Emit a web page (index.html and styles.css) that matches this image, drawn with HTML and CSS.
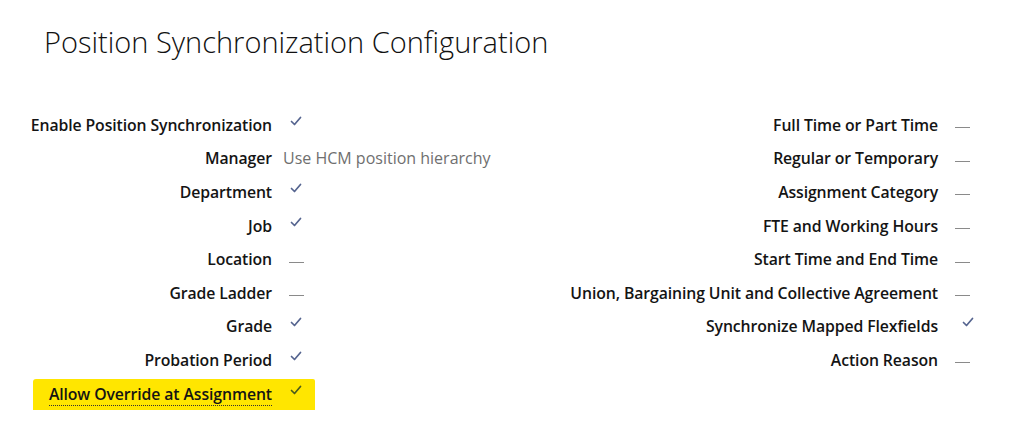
FILE: index.html
```html
<!DOCTYPE html>
<html lang="en">
<head>
    <meta charset="UTF-8">
    <meta name="viewport" content="width=device-width, initial-scale=1.0">
    <title>Position Synchronization Configuration</title>
    <link rel="stylesheet" href="styles.css">
</head>
<body>

<div class="page">
    <h1 class="title">Position Synchronization Configuration</h1>

    <div class="form">
        <div class="group left">
            <div class="row"><span class="label">Enable Position Synchronization</span><span class="value"><svg class="check" viewBox="0 0 12 10"><path d="M1.5 5.5 L4.5 8.5 L10.5 1.5"/></svg></span></div>
            <div class="row"><span class="label">Manager</span><span class="value text">Use HCM position hierarchy</span></div>
            <div class="row"><span class="label">Department</span><span class="value"><svg class="check" viewBox="0 0 12 10"><path d="M1.5 5.5 L4.5 8.5 L10.5 1.5"/></svg></span></div>
            <div class="row"><span class="label">Job</span><span class="value"><svg class="check" viewBox="0 0 12 10"><path d="M1.5 5.5 L4.5 8.5 L10.5 1.5"/></svg></span></div>
            <div class="row"><span class="label">Location</span><span class="value"><span class="dash"></span></span></div>
            <div class="row"><span class="label">Grade Ladder</span><span class="value"><span class="dash"></span></span></div>
            <div class="row"><span class="label">Grade</span><span class="value"><svg class="check" viewBox="0 0 12 10"><path d="M1.5 5.5 L4.5 8.5 L10.5 1.5"/></svg></span></div>
            <div class="row"><span class="label">Probation Period</span><span class="value"><svg class="check" viewBox="0 0 12 10"><path d="M1.5 5.5 L4.5 8.5 L10.5 1.5"/></svg></span></div>
            <div class="row marked"><span class="label"><span class="hint">Allow Override at Assignment</span></span><span class="value"><svg class="check" viewBox="0 0 12 10"><path d="M1.5 5.5 L4.5 8.5 L10.5 1.5"/></svg></span></div>
        </div>

        <div class="group right">
            <div class="row"><span class="label">Full Time or Part Time</span><span class="value"><span class="dash"></span></span></div>
            <div class="row"><span class="label">Regular or Temporary</span><span class="value"><span class="dash"></span></span></div>
            <div class="row"><span class="label">Assignment Category</span><span class="value"><span class="dash"></span></span></div>
            <div class="row"><span class="label">FTE and Working Hours</span><span class="value"><span class="dash"></span></span></div>
            <div class="row"><span class="label">Start Time and End Time</span><span class="value"><span class="dash"></span></span></div>
            <div class="row"><span class="label">Union, Bargaining Unit and Collective Agreement</span><span class="value"><span class="dash"></span></span></div>
            <div class="row"><span class="label">Synchronize Mapped Flexfields</span><span class="value"><svg class="check" viewBox="0 0 12 10"><path d="M1.5 5.5 L4.5 8.5 L10.5 1.5"/></svg></span></div>
            <div class="row"><span class="label">Action Reason</span><span class="value"><span class="dash"></span></span></div>
        </div>
    </div>
</div>

</body>
</html>
```

FILE: styles.css
```css
body {
    margin: 0;
    background: #fff;
    font-family: "Open Sans", "Noto Sans", sans-serif;
    color: #000;
}

.page {
    padding: 22px 0 0 0;
}

.title {
    margin: 0 0 0 44px;
    font-size: 29px;
    font-weight: 300;
    line-height: 40px;
    color: #111;
}

.form {
    display: grid;
    grid-template-columns: 520px 1fr;
    margin-top: 46px;
}

.row {
    display: flex;
    align-items: center;
    height: 33.6px;
    position: relative;
}

.label {
    flex: none;
    text-align: right;
    font-size: 15.8px;
    font-weight: 600;
    letter-spacing: -0.1px;
    white-space: nowrap;
    position: relative;
    color: #141414;
}

.left .label {
    width: 272px;
}

.right .label {
    width: 418px;
}

.value {
    display: flex;
    align-items: center;
    position: relative;
}

.left .value {
    margin-left: 11px;
}

.right .value {
    margin-left: 17px;
}

.value.text {
    font-size: 16px;
    color: #6f6f6f;
}

.check {
    width: 12px;
    height: 10px;
    margin: -8px 0 0 7px;
    fill: none;
    stroke: #55648f;
    stroke-width: 1.7;
    stroke-linecap: round;
    stroke-linejoin: round;
}

.dash {
    display: block;
    width: 15px;
    height: 1px;
    margin: 6px 0 0 6px;
    background: #8a8a8a;
}

.right .dash {
    margin-left: 0;
}

.marked::before {
    content: "";
    position: absolute;
    left: 33px;
    top: 2px;
    width: 282px;
    height: 35px;
    background: #ffe600;
    border-radius: 3px 2px 4px 2px;
}

.marked .check {
    stroke: #4a5a1c;
}

.hint {
    border-bottom: 1px dotted #333;
}
```
